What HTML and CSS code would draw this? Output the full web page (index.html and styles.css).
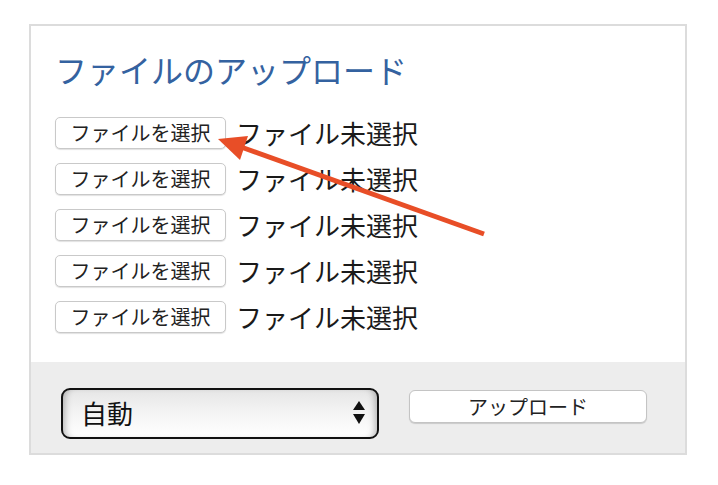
FILE: index.html
```html
<!DOCTYPE html>
<html lang="ja">
<head>
<meta charset="utf-8">
<title>ファイルのアップロード</title>
<link rel="stylesheet" href="styles.css">
</head>
<body>
<div class="panel">
  <div class="main">
    <h1 class="title">ファイルのアップロード</h1>
    <div class="rows">
      <div class="row"><button class="filebtn">ファイルを選択</button><span class="status">ファイル未選択</span></div>
      <div class="row"><button class="filebtn">ファイルを選択</button><span class="status">ファイル未選択</span></div>
      <div class="row"><button class="filebtn">ファイルを選択</button><span class="status">ファイル未選択</span></div>
      <div class="row"><button class="filebtn">ファイルを選択</button><span class="status">ファイル未選択</span></div>
      <div class="row"><button class="filebtn">ファイルを選択</button><span class="status">ファイル未選択</span></div>
    </div>
  </div>
  <div class="footer">
    <div class="select">
      <span class="select-text">自動</span>
      <svg class="select-arrows" width="12" height="24" viewBox="0 0 12 24">
        <polygon points="6,0 12,9 0,9" fill="#111"/>
        <polygon points="0,13 12,13 6,23" fill="#111"/>
      </svg>
    </div>
    <button class="upload">アップロード</button>
  </div>
</div>
<svg class="arrow" width="718" height="485" viewBox="0 0 718 485">
  <line x1="484" y1="234" x2="241" y2="147" stroke="#e84e27" stroke-width="5"/>
  <polygon points="218,139 248,136 240,160" fill="#e84e27"/>
</svg>
</body>
</html>
```

FILE: styles.css
```css
* { box-sizing: border-box; }
html, body { margin: 0; padding: 0; background: #fff; }
body {
  font-family: "Noto Sans CJK JP", "Noto Sans", sans-serif;
  position: relative;
  width: 718px;
  height: 485px;
  overflow: hidden;
}
.panel {
  margin: 24px 0 0 29px;
  width: 658px;
  height: 431px;
  border: 2px solid #dcdcdc;
  display: flex;
  flex-direction: column;
}
.main {
  height: 336px;
  padding: 23px 0 0 24px;
}
.title {
  margin: 0 0 28px 0;
  font-size: 32px;
  line-height: 40px;
  font-weight: 400;
  color: #3462a0;
}
.rows {
  display: flex;
  flex-direction: column;
  gap: 14px;
}
.row {
  display: flex;
  align-items: center;
  height: 32px;
}
.filebtn {
  width: 171px;
  height: 32px;
  padding: 0;
  border: 1px solid #c9c9c9;
  border-radius: 5px;
  background: #fff;
  box-shadow: 0 1px 1px rgba(0,0,0,0.12);
  font-family: inherit;
  font-size: 20px;
  line-height: 30px;
  color: #222;
}
.status {
  margin-left: 10px;
  font-size: 26px;
  line-height: 32px;
  color: #1a1a1a;
}
.footer {
  flex: 1;
  background: #ededed;
  display: flex;
  align-items: flex-start;
  padding: 26px 0 0 30px;
  gap: 30px;
}
.select {
  width: 318px;
  height: 51px;
  border: 2px solid #111;
  border-radius: 9px;
  background: linear-gradient(to bottom, #e6e6e6 0%, #f3f3f3 45%, #ffffff 100%);
  box-shadow: inset 7px 0 7px -5px rgba(0,0,0,0.28), inset -7px 0 7px -5px rgba(0,0,0,0.28);
  display: flex;
  align-items: center;
  justify-content: space-between;
  padding: 0 12px 2px 18px;
}
.select-text {
  font-size: 26px;
  line-height: 30px;
  color: #111;
}
.select-arrows { display: block; }
.upload {
  margin-top: 2px;
  width: 238px;
  height: 33px;
  padding: 0;
  border: 1px solid #c4c4c4;
  border-radius: 6px;
  background: #fff;
  box-shadow: 0 1px 1px rgba(0,0,0,0.15);
  font-family: inherit;
  font-size: 20px;
  line-height: 31px;
  color: #222;
}
.arrow {
  position: absolute;
  left: 0;
  top: 0;
  pointer-events: none;
}
```
